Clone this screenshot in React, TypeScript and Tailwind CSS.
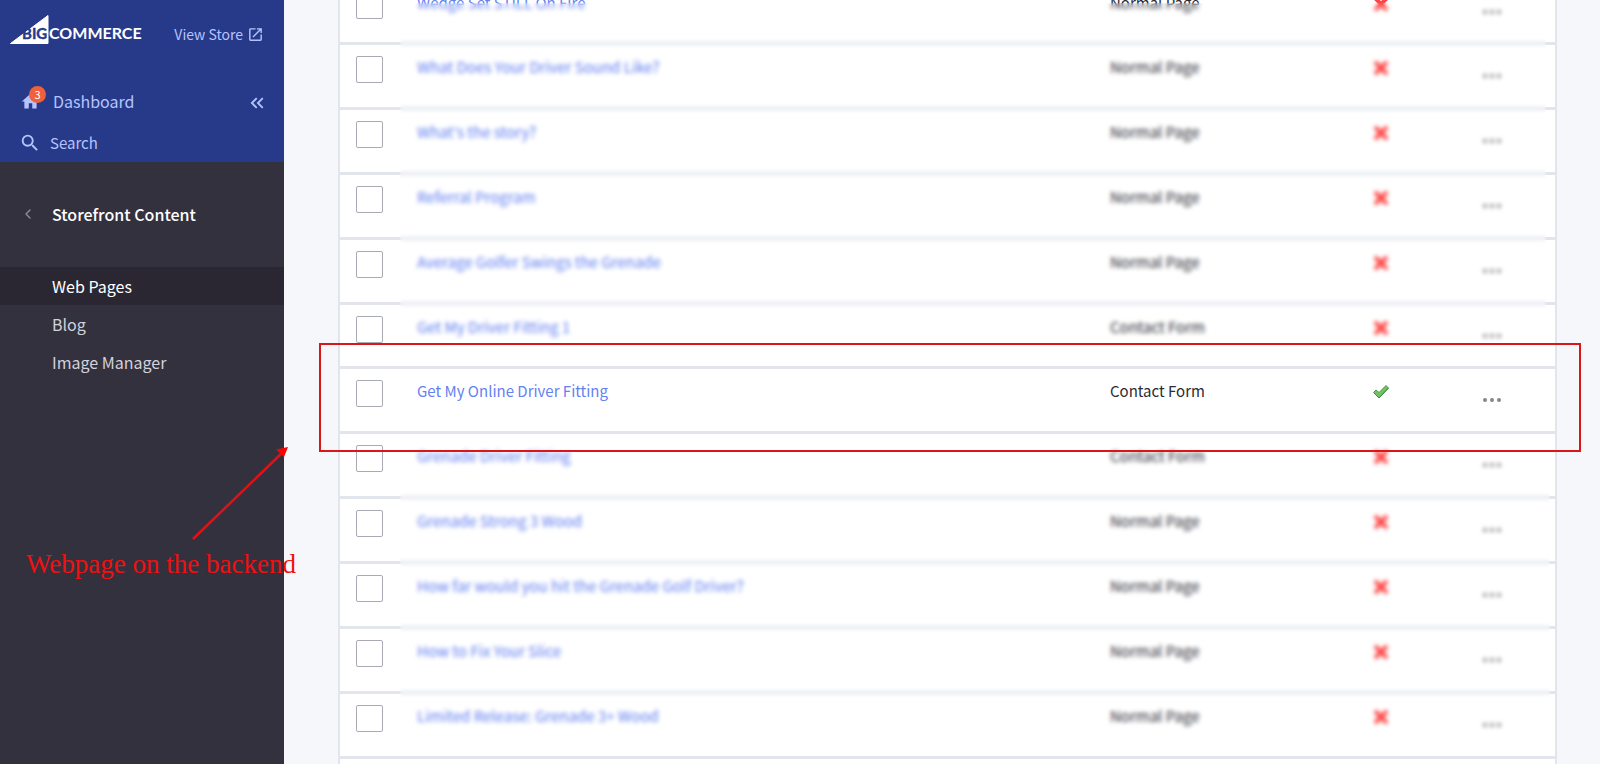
import { ChevronLeft } from "lucide-react";
import { MdHome, MdSearch, MdOpenInNew, MdKeyboardDoubleArrowLeft } from "react-icons/md";

const pages = [
  { title: "Wedge Set STILL On Fire", type: "Normal Page", visible: false },
  { title: "What Does Your Driver Sound Like?", type: "Normal Page", visible: false },
  { title: "What's the story?", type: "Normal Page", visible: false },
  { title: "Referral Program", type: "Normal Page", visible: false },
  { title: "Average Golfer Swings the Grenade", type: "Normal Page", visible: false },
  { title: "Get My Driver Fitting 1", type: "Contact Form", visible: false },
  { title: "Get My Online Driver Fitting", type: "Contact Form", visible: true },
  { title: "Grenade Driver Fitting", type: "Contact Form", visible: false },
  { title: "Grenade Strong 3 Wood", type: "Normal Page", visible: false },
  { title: "How far would you hit the Grenade Golf Driver?", type: "Normal Page", visible: false },
  { title: "How to Fix Your Slice", type: "Normal Page", visible: false },
  { title: "Limited Release: Grenade 3+ Wood", type: "Normal Page", visible: false },
];

const subLinks = ["Blog", "Image Manager"];

function Logo() {
  return (
    <a href="#" aria-label="BigCommerce" className="block">
      <svg width="132" height="32" viewBox="0 0 132 32" className="block">
        <path d="M38 1.500V29.500H.5Z" fill="#fff" stroke="#fff" strokeLinejoin="round" />
        <text x="12" y="25" fontFamily="Lato, sans-serif" fontWeight="700" fontSize="15" fill="#273a8a" stroke="#273a8a" strokeWidth="0.4">BIG</text>
        <text x="39" y="25" fontFamily="Lato, sans-serif" fontWeight="700" fontSize="16" fill="#fff">COMMERCE</text>
      </svg>
    </a>
  );
}

function CheckIcon() {
  return (
    <svg width="18" height="18" viewBox="0 0 18 18" className="block">
      <path d="M1.500 9.500 4 7l3 2.500L14 2.500l2.500 2.500L7 15Z" fill="#74c069" stroke="#4a9a48" strokeWidth="1" strokeLinejoin="round" />
      <path d="M2.500 10.500 7 15l9.500-10" fill="none" stroke="#3c8a3e" strokeWidth="1" />
    </svg>
  );
}

function CrossIcon() {
  return (
    <svg width="18" height="18" viewBox="0 0 18 18" className="block">
      <path d="m3 3 12 12M15 3 3 15" stroke="#ff4545" strokeWidth="4" />
    </svg>
  );
}

export default function App() {
  return (
    <div className="relative flex h-screen overflow-hidden bg-[#f5f7fa] font-['Noto_Sans_CJK_SC',sans-serif] text-[15px] leading-5">

      {/* SIDEBAR */}
      <aside className="w-[284px] shrink-0 bg-[#34313f]">
        <div className="h-[162px] bg-[#273a8a] text-[#b5c4ff]">
          <div className="flex items-center justify-between pt-[14px] pr-5 pl-[10px]">
            <Logo />
            <a href="#" className="flex items-center gap-1 pt-2 text-sm">
              View Store
              <MdOpenInNew size={17} />
            </a>
          </div>

          <div className="flex items-center justify-between pt-[42px] pr-4 pl-5">
            <a href="#" className="relative flex items-center gap-3 text-base leading-5">
              <MdHome size={21} />
              Dashboard
              <span className="absolute -top-[5px] left-[9px] flex h-[17px] w-[17px] items-center justify-center rounded-full bg-[#f0603a] text-[11px] text-white">
                3
              </span>
            </a>
            <button type="button" aria-label="Collapse menu" className="pt-1">
              <MdKeyboardDoubleArrowLeft size={22} />
            </button>
          </div>

          <a href="#" className="flex items-center gap-[9px] pt-[18px] pl-[19px]">
            <MdSearch size={22} />
            Search
          </a>
        </div>

        <div className="flex items-center gap-4 pt-[42px] pl-5">
          <ChevronLeft size={16} className="text-[#8f8d99]" />
          <h2 className="text-base leading-5 font-medium text-white">Storefront Content</h2>
        </div>

        <nav className="mt-[43px] text-base leading-5">
          <a href="#" className="block bg-[#2a2733] py-[9px] pl-[52px] text-white">
            Web Pages
          </a>
          {subLinks.map((label) => (
            <a key={label} href="#" className="block py-[9px] pl-[52px] text-[#d3d2dc]">
              {label}
            </a>
          ))}
        </nav>
      </aside>

      {/* PAGE LIST */}
      <main className="min-w-0 flex-1 pr-[43px] pl-[54px]">
        <div className="-mt-[19px] h-[800px] border-x-2 border-[#e3e5ed] bg-white">
          <table className="h-[778px] w-full table-fixed text-left">
            <colgroup>
              <col className="w-[77px]" />
              <col />
              <col className="w-[196px]" />
              <col className="w-[150px]" />
              <col className="w-[99px]" />
            </colgroup>
            <tbody>
              {pages.map((page) => (
                <tr key={page.title} className="border-b-3 border-[#e3e5ed] align-top">
                  <td className="pt-[11px] pl-4">
                    <input
                      type="checkbox"
                      aria-label={page.title}
                      className="block h-[27px] w-[27px] appearance-none rounded-xs border border-[#a9aab5] bg-white"
                    />
                  </td>
                  <td className="pt-3">
                    <a href="#" className="text-[#6482f2]">{page.title}</a>
                  </td>
                  <td className="pt-3 text-[#2b2b35]">{page.type}</td>
                  <td className="pt-[14px]">
                    <div className="flex justify-center">
                      {page.visible ? <CheckIcon /> : <CrossIcon />}
                    </div>
                  </td>
                  <td className="pt-[29px] pr-7">
                    <button type="button" aria-label="Actions" className="mx-auto flex gap-[3px]">
                      <span className="h-1 w-1 rounded-full bg-[#85858d]" />
                      <span className="h-1 w-1 rounded-full bg-[#85858d]" />
                      <span className="h-1 w-1 rounded-full bg-[#85858d]" />
                    </button>
                  </td>
                </tr>
              ))}
            </tbody>
          </table>
        </div>
      </main>

      {/* BLUR OVER THE OTHER ROWS */}
      <div className="pointer-events-none absolute top-[3px] right-[54px] left-[400px] h-[358px] backdrop-blur-[2px]" />
      <div className="pointer-events-none absolute top-[438px] right-[50px] left-[400px] h-[314px] backdrop-blur-[2px]" />

      {/* ANNOTATIONS */}
      <div className="pointer-events-none absolute top-[343px] right-[19px] left-[319px] h-[109px] border-2 border-[#d81818]" />
      <svg className="pointer-events-none absolute top-[440px] left-[185px]" width="110" height="105" viewBox="0 0 110 105">
        <path d="M8 99 97 13" stroke="#e01217" strokeWidth="2.500" />
        <path d="M103 7 99 17 91 9.500Z" fill="#f00" />
      </svg>
      <p className="pointer-events-none absolute top-[548px] left-[26px] font-['Liberation_Serif',serif] text-[27px] leading-8 whitespace-nowrap text-[#f01010]">
        Webpage on the backend
      </p>

    </div>
  );
}
